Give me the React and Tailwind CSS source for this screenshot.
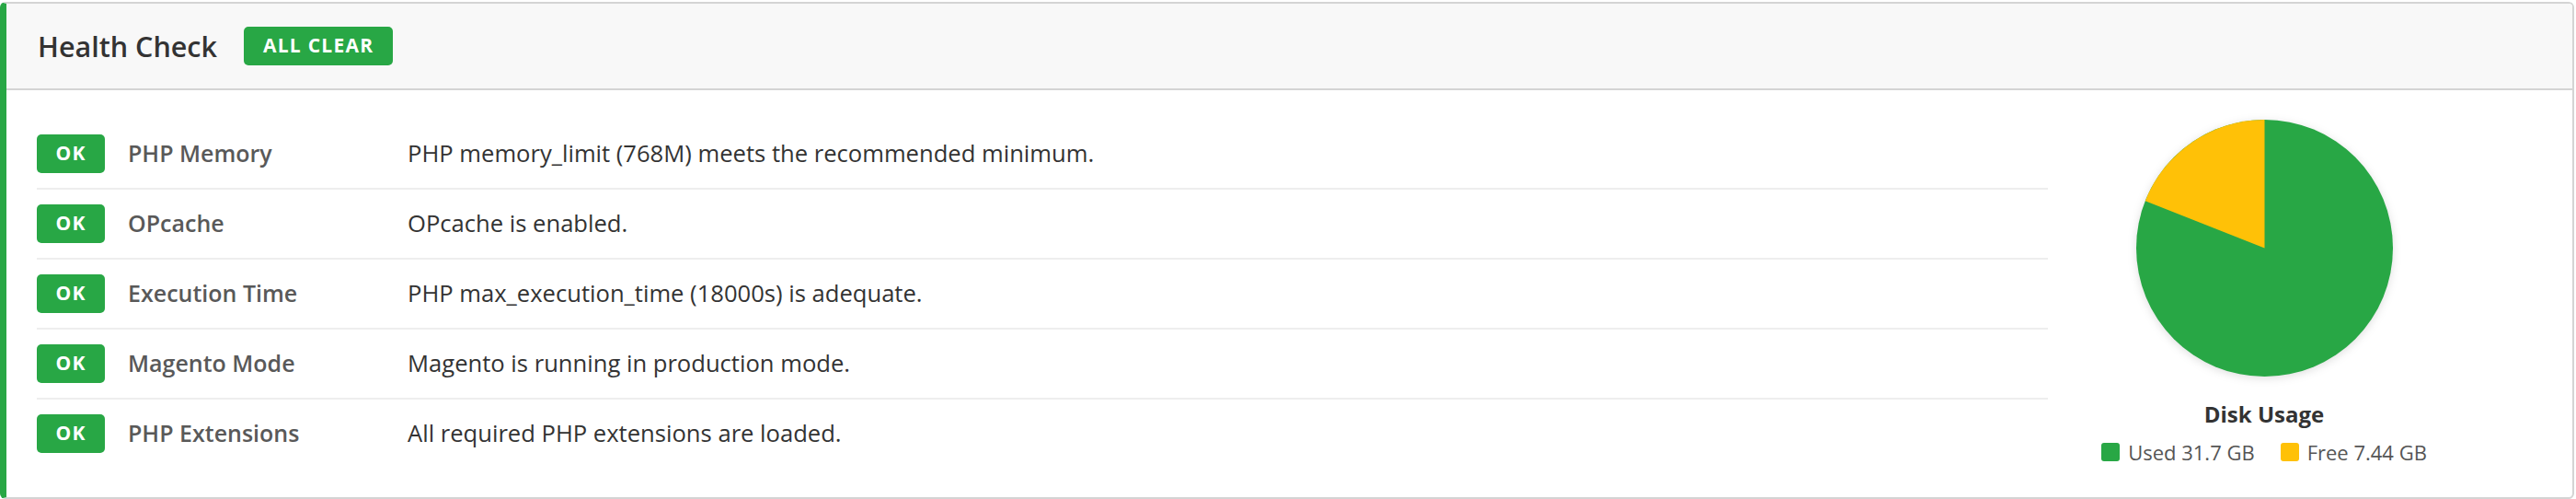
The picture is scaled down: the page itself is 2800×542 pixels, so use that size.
const checks = [
  { name: 'PHP Memory', message: 'PHP memory_limit (768M) meets the recommended minimum.' },
  { name: 'OPcache', message: 'OPcache is enabled.' },
  { name: 'Execution Time', message: 'PHP max_execution_time (18000s) is adequate.' },
  { name: 'Magento Mode', message: 'Magento is running in production mode.' },
  { name: 'PHP Extensions', message: 'All required PHP extensions are loaded.' },
]

const disk = { used: 31.7, free: 7.44 }

function DiskPie({ used, free }) {
  // used slice starts at 12 o'clock and runs clockwise, free fills the rest
  const theta = (used / (used + free)) * Math.PI * 2
  const x = 50 + 50 * Math.sin(theta)
  const y = 50 - 50 * Math.cos(theta)
  return (
    <svg viewBox="0 0 100 100" className="w-[279px] h-[279px] drop-shadow-[0_2px_5px_rgba(0,0,0,0.13)]">
      <circle cx="50" cy="50" r="50" fill="#28a745" />
      <path d={`M50 50 L${x} ${y} A50 50 0 0 1 50 0 Z`} fill="#ffc107" />
    </svg>
  )
}

export default function App() {
  return (
    <div className="w-full h-[542px] bg-white pt-[2px] pr-[2px] font-['Open_Sans',sans-serif]">
      <div className="h-[540px] flex flex-col rounded-[6px] border-2 border-l-[7px] border-[#d4d4d4] border-l-[#28a745] overflow-hidden">
        {/* Header */}
        <div className="h-[94px] flex items-center pl-[34px] bg-[#f8f8f8] border-b-2 border-[#d4d4d4] flex-shrink-0">
          <h2 className="text-[30.5px] font-semibold text-[#333] leading-none">Health Check</h2>
          <span className="ml-[29px] h-[42px] px-[21px] flex items-center rounded-[5px] bg-[#28a745] text-white text-[21px] font-bold tracking-[0.06em]">
            ALL CLEAR
          </span>
        </div>

        {/* Body */}
        <div className="flex-1 flex pl-[33px] pr-[100px] py-[32px]">
          <div className="flex-1">
            {checks.map((c, i) => (
              <div key={c.name}
                className={`flex items-center py-[16px] ${i < checks.length - 1 ? 'border-b-2 border-[#eeeeee]' : ''}`}>
                <span className="w-[74px] h-[42px] flex items-center justify-center rounded-[5px] bg-[#28a745] text-white text-[21px] font-bold tracking-[0.06em] flex-shrink-0">
                  OK
                </span>
                <span className="ml-[25px] w-[304px] text-[25px] font-semibold text-[#595959]">{c.name}</span>
                <span className="text-[25.6px] text-[#333]">{c.message}</span>
              </div>
            ))}
          </div>

          <div className="w-[470px] flex flex-col items-center">
            <DiskPie used={disk.used} free={disk.free} />
            <p className="mt-[25px] text-[24px] leading-[32px] font-bold text-[#333]">Disk Usage</p>
            <div className="mt-[10px] flex items-center text-[22px] leading-[30px] text-[#555]">
              <span className="w-[20px] h-[20px] rounded-[3px] bg-[#28a745]" />
              <span className="ml-[9px]">Used {disk.used} GB</span>
              <span className="ml-[28px] w-[20px] h-[20px] rounded-[3px] bg-[#ffc107]" />
              <span className="ml-[9px]">Free {disk.free} GB</span>
            </div>
          </div>
        </div>
      </div>
    </div>
  )
}
